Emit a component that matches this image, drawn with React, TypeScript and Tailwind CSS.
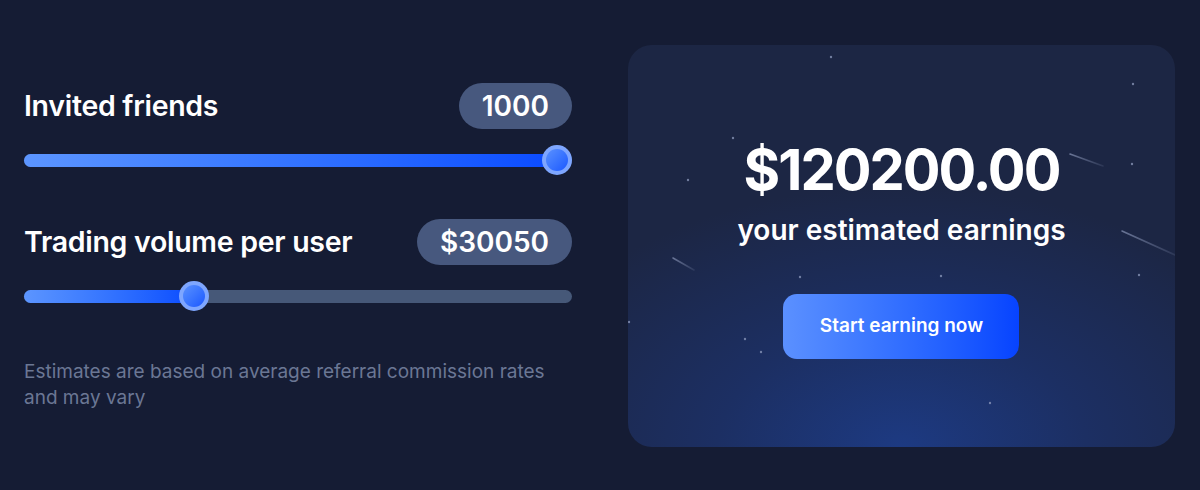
import React from "react";

const font = { fontFamily: "Inter, 'Noto Sans', sans-serif" };

function Slider({ pct }: { pct: number }) {
  const travel = 518;
  const left = pct * travel;
  return (
    <div className="relative h-[30px] w-full flex items-center">
      <div className="h-[13px] w-full rounded-full bg-[#465878]" />
      <div
        className="absolute left-0 top-[8.5px] h-[13px] rounded-full bg-gradient-to-r from-[#5c95ff] to-[#0a4aff]"
        style={{ width: left + 15 }}
      />
      <div
        className="absolute top-0 h-[30px] w-[30px] rounded-full bg-[#7ea6ff] p-[4px]"
        style={{ left }}
      >
        <div className="h-full w-full rounded-full bg-gradient-to-br from-[#5a90ff] to-[#1c56ff]" />
      </div>
    </div>
  );
}

function Row({ label, value }: { label: string; value: string }) {
  return (
    <div className="flex items-center justify-between">
      <span className="text-[28.5px] font-semibold text-white tracking-[-0.01em]">{label}</span>
      <span className="h-[46px] rounded-full bg-[#47587e] px-[23px] flex items-center text-[28px] font-semibold text-white">
        {value}
      </span>
    </div>
  );
}

function Stars() {
  const dots: [number, number][] = [
    [203, 12], [505, 39], [105, 93], [60, 135], [504, 119], [511, 230],
    [172, 232], [313, 231], [1, 277], [117, 294], [133, 307], [362, 358],
  ];
  const streaks: [number, number, number, number][] = [
    [442, 109, 475, 121],
    [494, 186, 547, 210],
    [45, 213, 66, 225],
  ];
  return (
    <svg className="absolute inset-0 h-full w-full" viewBox="0 0 547 402" preserveAspectRatio="none">
      <defs>
        <linearGradient id="st" x1="0" y1="0" x2="1" y2="0">
          <stop offset="0" stopColor="#8a96b8" stopOpacity="0.7" />
          <stop offset="1" stopColor="#8a96b8" stopOpacity="0.15" />
        </linearGradient>
      </defs>
      {dots.map(([x, y], i) => (
        <circle key={i} cx={x} cy={y} r={1.2} fill="#8f9bbd" opacity={0.75} />
      ))}
      {streaks.map(([x1, y1, x2, y2], i) => (
        <line key={i} x1={x1} y1={y1} x2={x2} y2={y2} stroke="url(#st)" strokeWidth={1.6} strokeLinecap="round" />
      ))}
    </svg>
  );
}

export default function App() {
  return (
    <div className="h-[490px] w-[1200px] bg-[#151c34] flex items-center pl-6 pr-[25px] gap-14" style={font}>
      <div className="w-[548px] flex flex-col pt-[4px]">
        <Row label="Invited friends" value="1000" />
        <div className="mt-[16px]">
          <Slider pct={1} />
        </div>
        <div className="mt-[44px]">
          <Row label="Trading volume per user" value="$30050" />
        </div>
        <div className="mt-[16px]">
          <Slider pct={0.299} />
        </div>
        <p className="mt-[48px] text-[19px] leading-[26px] text-[#6b7794]">
          Estimates are based on average referral commission rates
          <br />
          and may vary
        </p>
      </div>
      <div className="relative mt-[2px] w-[547px] h-[402px] rounded-[24px] overflow-hidden bg-[radial-gradient(ellipse_75%_65%_at_50%_100%,#1d3a82_0%,#1c2f63_45%,#1c2644_100%)] flex flex-col items-center pt-[93px]">
        <Stars />
        <div className="relative flex flex-col items-center">
          <div className="text-[56px] leading-[64px] font-bold text-white tracking-[-0.035em]">$120200.00</div>
          <div className="mt-[10px] text-[28px] leading-[36px] font-semibold text-white">your estimated earnings</div>
          <button className="mt-[46px] h-[65px] w-[236px] rounded-[14px] bg-gradient-to-r from-[#5b90ff] to-[#0743ff] text-[19px] font-semibold text-white">
            Start earning now
          </button>
        </div>
      </div>
    </div>
  );
}
